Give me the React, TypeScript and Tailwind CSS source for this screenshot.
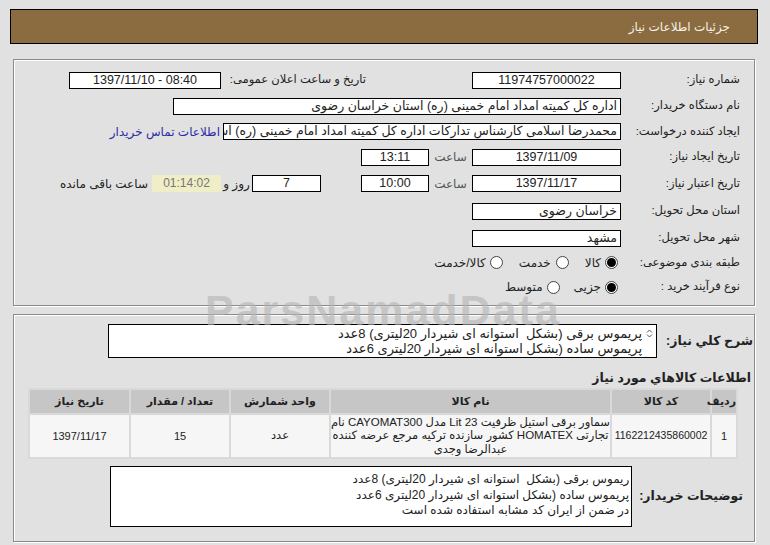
import React from 'react';

const font = "font-['Liberation_Sans','DejaVu_Sans',sans-serif]";
const box = 'h-[17px] border border-black bg-white text-[12.5px] leading-[15px] text-[#222] overflow-hidden whitespace-nowrap';

function Radio({ checked }: { checked?: boolean }) {
	return (
		<span className="flex h-[13px] w-[13px] items-center justify-center rounded-full border border-[#444] bg-white">
			{checked && <span className="h-[9px] w-[9px] rounded-full bg-black" />}
		</span>
	);
}

function Label({ children }: { children: React.ReactNode }) {
	return <div className="w-[119px] shrink-0 whitespace-nowrap text-[11.5px] text-[#222]">{children}</div>;
}

const items = {
	row: '1',
	code: '1162212435860002',
	name: ['سماور برقی استیل ظرفیت 23 Lit مدل CAYOMAT300 نام', 'تجارتی HOMATEX کشور سازنده ترکیه مرجع عرضه کننده', 'عبدالرضا وجدی'],
	unit: 'عدد',
	qty: '15',
	date: '1397/11/17',
};

export default function App() {
	return (
		<div dir="rtl" className={`relative h-[545px] w-[770px] overflow-hidden bg-[#e1e1e1] pt-[9px] ${font}`}>
			{/* Header bar */}
			<div className="ml-[10px] mr-[12px] flex h-[35px] items-center border border-black bg-[#8b6c40] pr-[27px] text-[12px] text-[#f4f0e8]">
				جزئیات اطلاعات نیاز
			</div>

			{/* Main info panel */}
			<div className="mr-[15px] mt-[15px] h-[247px] w-[742px] border border-[#8a8a8a] pr-[14px] pt-[7px] shadow-[inset_1px_1px_0_#fff,1px_1px_0_#fff]">
				<div className="flex h-[26px] items-center">
					<Label>شماره نیاز:</Label>
					<div className={`${box} w-[149px] text-center`}>11974757000022</div>
					<div className="mr-[106px] w-[145px] whitespace-nowrap text-[11.5px] text-[#222]">تاریخ و ساعت اعلان عمومی:</div>
					<div className={`${box} w-[152px] text-center`} dir="ltr">1397/11/10 - 08:40</div>
				</div>
				<div className="flex h-[26px] items-center">
					<Label>نام دستگاه خریدار:</Label>
					<div className={`${box} w-[448px] pr-[3px]`}>اداره کل کمیته امداد امام خمینی (ره) استان خراسان رضوی</div>
				</div>
				<div className="flex h-[25px] items-center">
					<Label>ایجاد کننده درخواست:</Label>
					<div className={`${box} w-[398px] pr-[3px]`}>
						محمدرضا اسلامی کارشناس تدارکات اداره کل کمیته امداد امام خمینی (ره) اس
					</div>
					<a className="mr-[3px] whitespace-nowrap text-[12px] text-[#2c2ca8]">اطلاعات تماس خریدار</a>
				</div>
				<div className="flex h-[26px] items-center">
					<Label>تاریخ ایجاد نیاز:</Label>
					<div className={`${box} w-[149px] text-center`}>1397/11/09</div>
					<div className="w-[43px] text-center text-[12px] text-[#555]">ساعت</div>
					<div className={`${box} w-[68px] text-center`}>13:11</div>
				</div>
				<div className="flex h-[27px] items-center">
					<Label>تاریخ اعتبار نیاز:</Label>
					<div className={`${box} w-[149px] text-center`}>1397/11/17</div>
					<div className="w-[43px] text-center text-[12px] text-[#555]">ساعت</div>
					<div className={`${box} w-[68px] text-center`}>10:00</div>
					<div className={`${box} mr-[40px] w-[69px] text-center`}>7</div>
					<div className="w-[31px] text-center text-[12px] text-[#222]">روز و</div>
					<div className="h-[17px] w-[69px] bg-[#f0eec6] text-center text-[12px] leading-[17px] text-[#777]">01:14:02</div>
					<div className="mr-[4px] whitespace-nowrap text-[12px] text-[#222]">ساعت باقی مانده</div>
				</div>
				<div className="flex h-[28px] items-center">
					<Label>استان محل تحویل:</Label>
					<div className={`${box} w-[149px] pr-[3px]`}>خراسان رضوی</div>
				</div>
				<div className="flex h-[26px] items-center">
					<Label>شهر محل تحویل:</Label>
					<div className={`${box} w-[149px] pr-[3px]`}>مشهد</div>
				</div>
				<div className="flex h-[23px] items-center text-[12px] text-[#222]">
					<Label>طبقه بندی موضوعی:</Label>
					<div className="mr-[3px] flex items-center gap-[4px]">
						<Radio checked />
						<span>کالا</span>
					</div>
					<div className="mr-[16px] flex items-center gap-[5px]">
						<Radio />
						<span>خدمت</span>
					</div>
					<div className="mr-[16px] flex items-center gap-[4px]">
						<Radio />
						<span>کالا/خدمت</span>
					</div>
				</div>
				<div className="flex h-[26px] items-center text-[12px] text-[#222]">
					<Label>نوع فرآیند خرید :</Label>
					<div className="mr-[3px] flex items-center gap-[4px]">
						<Radio checked />
						<span>جزیی</span>
					</div>
					<div className="mr-[14px] flex items-center gap-[4px]">
						<Radio />
						<span>متوسط</span>
					</div>
				</div>
			</div>

			{/* Items panel */}
			<div className="mr-[15px] mt-[8px] h-[228px] w-[742px] border border-[#8a8a8a] shadow-[inset_1px_1px_0_#fff,1px_1px_0_#fff]">
				<div className="mt-[9px] flex items-center gap-[9px] pr-[1px]">
					<div className="whitespace-nowrap text-[12.5px] font-bold text-[#222]">شرح کلي نیاز:</div>
					<div className="flex h-[34px] w-[549px] overflow-hidden border border-black bg-white pt-[1px] text-[13px] leading-[15px] text-[#222]">
						<div className="flex w-[13px] shrink-0 flex-col items-center pt-[3px]">
							<svg width="7" height="9" viewBox="0 0 7 9" fill="none" stroke="#555" strokeWidth="1">
								<path d="M1 3.5 3.5 1 6 3.5M1 5.5 3.5 8 6 5.5" />
							</svg>
						</div>
						<div className="pr-[1px]">
							<div>پریموس برقی (بشکل&nbsp; استوانه ای شیردار 20لیتری) 8عدد</div>
							<div>پریموس ساده (بشکل استوانه ای شیردار 20لیتری 6عدد</div>
						</div>
					</div>
				</div>
				<div className="mt-[12px] pr-[3px] text-[12.5px] font-bold leading-[16px] text-[#222]">اطلاعات کالاهاي مورد نياز</div>
				<div className="mr-[16px] mt-[2px] w-[710px]">
					<table className="w-[710px] table-fixed border-separate border-spacing-[2px] bg-[#d9d9d9] text-[11.5px] text-[#222]">
						<colgroup>
							<col className="w-[24px]" />
							<col className="w-[98px]" />
							<col className="w-[279px]" />
							<col className="w-[98px]" />
							<col className="w-[98px]" />
							<col className="w-[99px]" />
						</colgroup>
						<thead>
							<tr className="h-[23px] bg-[#c6c6c6] text-[11px] font-bold">
								<th>ردیف</th>
								<th>کد کالا</th>
								<th>نام کالا</th>
								<th>واحد شمارش</th>
								<th>تعداد / مقدار</th>
								<th>تاریخ نیاز</th>
							</tr>
						</thead>
						<tbody>
							<tr className="h-[42px] bg-[#f6f6f6] text-center">
								<td className="text-[11px]">{items.row}</td>
								<td className="whitespace-nowrap text-[10.5px]">{items.code}</td>
								<td className="leading-[13.5px]">
									{items.name.map((l) => (
										<div key={l} className="whitespace-nowrap">{l}</div>
									))}
								</td>
								<td>{items.unit}</td>
								<td className="text-[11px]">{items.qty}</td>
								<td className="text-[11px]">{items.date}</td>
							</tr>
						</tbody>
					</table>
				</div>
				<div className="mt-[7px] flex items-center gap-[7px] pr-[11px]">
					<div className="whitespace-nowrap text-[12.5px] font-bold text-[#222]">توضیحات خریدار:</div>
					<div className="h-[61px] w-[522px] border border-black bg-white pr-[2px] pt-[5px] text-[12px] leading-[15.5px] text-[#222]">
						<div>ریموس برقی (بشکل&nbsp; استوانه ای شیردار 20لیتری) 8عدد</div>
						<div>پریموس ساده (بشکل استوانه ای شیردار 20لیتری 6عدد</div>
						<div>در ضمن از ایران کد مشابه استفاده شده است</div>
					</div>
				</div>
			</div>

			{/* Watermark */}
			<div className="pointer-events-none absolute left-[205px] top-[295px] font-['Liberation_Sans',sans-serif] text-[43px] font-bold leading-[30px] tracking-[2px] text-[#b4b4b4] opacity-60" dir="ltr">
				ParsNamadData
			</div>
		</div>
	);
}
